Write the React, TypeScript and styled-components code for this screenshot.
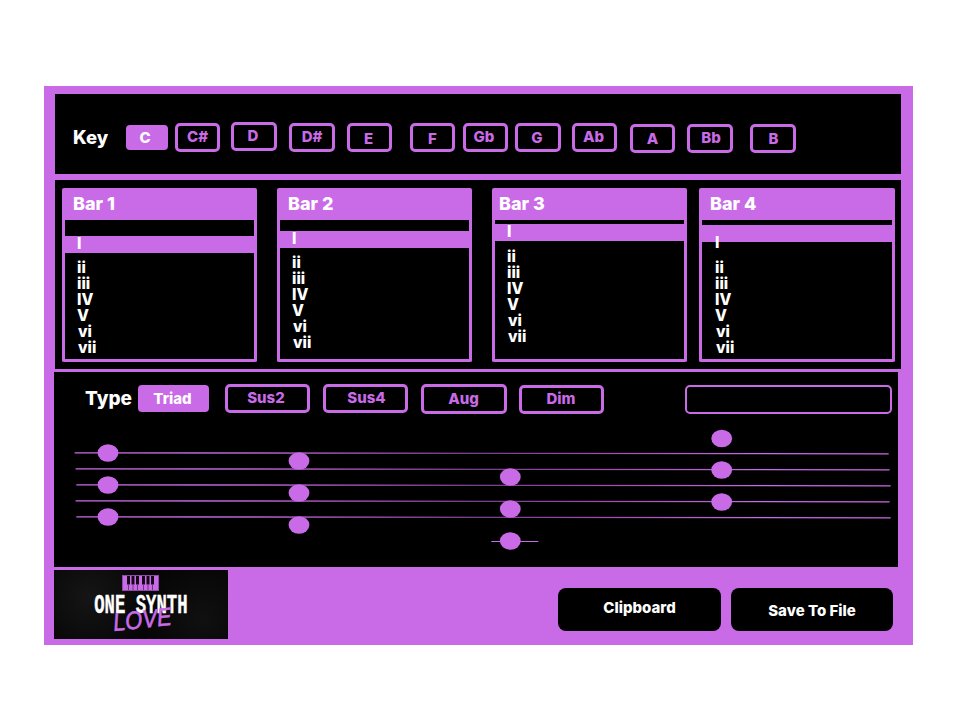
import React from "react";
import styled, { createGlobalStyle } from "styled-components";

const PURPLE = "#c96ae6";
const FONT = `Inter, "Liberation Sans", sans-serif`;

const GlobalStyle = createGlobalStyle`
  html, body { margin: 0; padding: 0; background: #fff; }
  body { font-family: ${FONT}; }
`;

// per button: [label, left margin, top offset inside the panel, width, height, text nudge x, text nudge y]
const KEYS: [string, number, number, number, number, number, number][] = [
  ["C#", 7, 29, 45, 29, 0, -3],
  ["D", 11, 28, 46, 29, -2, -3],
  ["D#", 12, 29, 46, 29, 0, -3],
  ["E", 12, 29, 45, 29, -2, 1],
  ["F", 18, 29, 45, 29, 0, 1],
  ["Gb", 8, 29, 45, 29, -3, -3],
  ["G", 7, 29, 46, 29, -2, -1],
  ["Ab", 11, 29, 45, 29, -2, -2],
  ["A", 13, 30, 45, 29, 0, 0],
  ["Bb", 12, 30, 46, 29, 2, -2],
  ["B", 17, 30, 46, 29, 1, -1],
];

const BARS = [
  { name: "Bar 1", ml: 7, w: 195, pad: 16, band: 16, gap: 7, x: 12, nameX: 8 },
  { name: "Bar 2", ml: 20, w: 195, pad: 11, band: 15, gap: 7, x: 12, nameX: 8 },
  { name: "Bar 3", ml: 20, w: 195, pad: 4, band: 16, gap: 8, x: 12, nameX: 4 },
  { name: "Bar 4", ml: 12, w: 196, pad: 5, band: 36, gap: 18, x: 13, nameX: 8 },
];

const DEGREES: [string, number][] = [
  ["ii", 0],
  ["iii", 0],
  ["IV", 0],
  ["V", 0],
  ["vi", 1],
  ["vii", 1],
];

const TYPES = [
  { label: "Sus2", ml: 16, mt: 12, w: 85, h: 29, dx: -3, dy: -2 },
  { label: "Sus4", ml: 13, mt: 12, w: 85, h: 29, dx: 2, dy: -2 },
  { label: "Aug", ml: 13, mt: 12, w: 86, h: 30, dx: -1, dy: -2 },
  { label: "Dim", ml: 12, mt: 13, w: 85, h: 29, dx: -1, dy: -2 },
];

const STAFF = [
  [74.6, 452.3, 888.7, 453.3],
  [75.6, 468.3, 889.6, 469.3],
  [76.3, 484.3, 890.7, 485.3],
  [75.6, 500.3, 889.6, 501.3],
  [76.3, 516.3, 890.7, 517.3],
];

const NOTES = [
  [108, 453], [108, 485], [108, 517],
  [299, 461], [299, 493], [299, 525],
  [510.3, 477], [510.3, 509], [510.3, 541],
  [721.7, 438.5], [721.7, 470], [721.7, 502],
];

const App = () => {
  return (
    <>
      <GlobalStyle />
      <Frame>
        <KeyPanel>
          <PanelLabel>Key</PanelLabel>
          <ActiveKey>C</ActiveKey>
          {KEYS.map(([label, ml, mt, w, h, dx, dy]) => (
            <OutlineButton key={label} $ml={ml} $mt={mt} $w={w} $h={h} $dx={dx} $dy={dy}>
              {label}
            </OutlineButton>
          ))}
        </KeyPanel>

        <BarsPanel>
          {BARS.map((bar) => (
            <BarCard key={bar.name} $ml={bar.ml} $w={bar.w}>
              <BarHeader $x={bar.nameX}>{bar.name}</BarHeader>
              <DegreeList $pad={bar.pad}>
                <SelectedDegree $lh={bar.band} $x={bar.x}>I</SelectedDegree>
                <DegreeRows $gap={bar.gap}>
                  {DEGREES.map(([d, shift]) => (
                    <Degree key={d} $x={bar.x + shift}>{d}</Degree>
                  ))}
                </DegreeRows>
              </DegreeList>
            </BarCard>
          ))}
        </BarsPanel>

        <TypePanel>
          <TypeRow>
            <TypeLabel>Type</TypeLabel>
            <ActiveType>Triad</ActiveType>
            {TYPES.map((t) => (
              <OutlineButton key={t.label} $ml={t.ml} $mt={t.mt} $w={t.w} $h={t.h} $dx={t.dx} $dy={t.dy}>
                {t.label}
              </OutlineButton>
            ))}
            <NameField />
          </TypeRow>
          <Staff viewBox="54 418 844 149">
            <defs>
              <linearGradient id="fade" x1="0" x2="1" y1="0" y2="0">
                <stop offset="0" stopColor={PURPLE} />
                <stop offset="0.15" stopColor={PURPLE} />
                <stop offset="0.5" stopColor={PURPLE} stopOpacity="0.6" />
                <stop offset="0.85" stopColor={PURPLE} />
                <stop offset="1" stopColor={PURPLE} />
              </linearGradient>
            </defs>
            {STAFF.map(([x1, y1, x2, y2]) => (
              <polygon
                key={y1}
                points={`${x1},${y1 - 0.15} ${x2},${y2 - 0.15} ${x2},${y2 + 1.15} ${x1},${y1 + 1.15}`}
                fill="url(#fade)"
              />
            ))}
            <rect x="491.3" y="541" width="47" height="1" fill={PURPLE} />
            {NOTES.map(([cx, cy]) => (
              <ellipse key={`${cx}-${cy}`} cx={cx} cy={cy} rx="10.4" ry="8.7" fill={PURPLE} />
            ))}
          </Staff>
        </TypePanel>

        <BottomRow>
          <Logo>
            <svg width="37" height="16" viewBox="0 0 37 16">
              <rect x="0.5" y="0.5" width="36" height="15" fill={PURPLE} stroke="#8f4aa6" />
              {[5, 9.5, 14, 20, 24.5, 29].map((x) => (
                <rect key={x} x={x} y="1" width="3" height="8.5" fill="#140818" />
              ))}
              {[6, 10.5, 15, 21, 25.5, 30].map((x) => (
                <rect key={x} x={x} y="9" width="1" height="6" fill="#6d3480" />
              ))}
            </svg>
            <LogoTitle>ONE SYNTH</LogoTitle>
            <LogoScript>LOVE</LogoScript>
          </Logo>
          <ActionButton $ml={330} $w={163} $dy={-2}>Clipboard</ActionButton>
          <ActionButton $ml={10} $w={162} $dy={1}>Save To File</ActionButton>
        </BottomRow>
      </Frame>
    </>
  );
};

const Frame = styled.div`
  box-sizing: border-box;
  width: 869px;
  height: 559px;
  margin: 86px 0 0 44px;
  background: ${PURPLE};
  display: flex;
  flex-direction: column;
  font-family: ${FONT};
`;

/* ================= KEY ROW ================= */
const KeyPanel = styled.div`
  box-sizing: border-box;
  width: 846px;
  height: 80px;
  margin: 8px 0 0 11px;
  padding-left: 18px;
  background: #000;
  display: flex;
  align-items: flex-start;
`;

const PanelLabel = styled.div`
  width: 53px;
  margin-top: 32px;
  color: #fff;
  font-size: 18.5px;
  line-height: 22px;
  font-weight: 800;
`;

const ActiveKey = styled.div`
  width: 42px;
  height: 25px;
  margin-top: 31px;
  padding-right: 4px;
  box-sizing: border-box;
  border-radius: 4px;
  background: ${PURPLE};
  color: #fff;
  font-size: 15px;
  font-weight: 800;
  display: flex;
  align-items: center;
  justify-content: center;
`;

const OutlineButton = styled.div<{ $ml: number; $mt: number; $w: number; $h: number; $dx: number; $dy: number }>`
  box-sizing: border-box;
  flex: none;
  width: ${(p) => p.$w}px;
  height: ${(p) => p.$h}px;
  margin-left: ${(p) => p.$ml}px;
  margin-top: ${(p) => p.$mt}px;
  padding-left: ${(p) => Math.max(p.$dx, 0)}px;
  padding-right: ${(p) => Math.max(-p.$dx, 0)}px;
  padding-top: ${(p) => Math.max(p.$dy, 0)}px;
  padding-bottom: ${(p) => Math.max(-p.$dy, 0)}px;
  border: 3px solid ${PURPLE};
  border-radius: 5px;
  color: ${PURPLE};
  font-size: 15px;
  font-weight: 800;
  display: flex;
  align-items: center;
  justify-content: center;
`;

/* ================= BARS ================= */
const BarsPanel = styled.div`
  box-sizing: border-box;
  width: 846px;
  height: 189px;
  margin: 6px 0 0 11px;
  padding: 8px 0 7px;
  background: #000;
  display: flex;
`;

const BarCard = styled.div<{ $ml: number; $w: number }>`
  box-sizing: border-box;
  width: ${(p) => p.$w}px;
  height: 174px;
  margin-left: ${(p) => p.$ml}px;
  border: 3px solid ${PURPLE};
  border-top: 0;
  border-radius: 2px;
  display: flex;
  flex-direction: column;
`;

const BarHeader = styled.div<{ $x: number }>`
  box-sizing: border-box;
  height: 32px;
  padding: 5px 0 0 ${(p) => p.$x}px;
  background: ${PURPLE};
  color: #fff;
  font-size: 18px;
  line-height: 22px;
  font-weight: 800;
`;

const DegreeList = styled.div<{ $pad: number }>`
  flex: 1;
  padding-top: ${(p) => p.$pad}px;
  color: #fff;
  font-size: 15.5px;
  font-weight: 800;
`;

const SelectedDegree = styled.div<{ $lh: number; $x: number }>`
  height: 17px;
  padding-left: ${(p) => p.$x}px;
  background: ${PURPLE};
  line-height: ${(p) => p.$lh}px;
`;

const DegreeRows = styled.div<{ $gap: number }>`
  margin-top: ${(p) => p.$gap}px;
`;

const Degree = styled.div<{ $x: number }>`
  height: 16.1px;
  line-height: 16px;
  padding-left: ${(p) => p.$x}px;
`;

/* ================= CHORD TYPE + STAFF ================= */
const TypePanel = styled.div`
  width: 844px;
  height: 195px;
  margin: 3px 0 0 10px;
  background: #000;
  display: flex;
  flex-direction: column;
`;

const TypeRow = styled.div`
  height: 46px;
  padding-left: 31px;
  display: flex;
  align-items: flex-start;
`;

const TypeLabel = styled.div`
  width: 53px;
  margin-top: 15px;
  color: #fff;
  font-size: 19px;
  line-height: 23px;
  font-weight: 800;
`;

const ActiveType = styled.div`
  box-sizing: border-box;
  width: 71px;
  height: 27px;
  margin-top: 13px;
  padding: 0 2px 1px 0;
  border-radius: 4px;
  background: ${PURPLE};
  color: #fff;
  font-size: 15px;
  font-weight: 800;
  display: flex;
  align-items: center;
  justify-content: center;
`;

const NameField = styled.div`
  box-sizing: border-box;
  width: 207px;
  height: 29px;
  margin: 13px 0 0 81px;
  border: 2px solid ${PURPLE};
  border-radius: 5px;
`;

const Staff = styled.svg`
  display: block;
  width: 844px;
  height: 149px;
`;

/* ================= BOTTOM ROW ================= */
const BottomRow = styled.div`
  margin: 3px 0 0 10px;
  display: flex;
  align-items: flex-start;
`;

const Logo = styled.div`
  position: relative;
  width: 174px;
  height: 69px;
  padding-top: 5px;
  box-sizing: border-box;
  background-color: #050505;
  background-image: radial-gradient(circle at 20% 40%, #151515 0, transparent 45%),
    radial-gradient(circle at 85% 70%, #101010 0, transparent 40%);
  display: flex;
  flex-direction: column;
  align-items: center;

  svg {
    display: block;
    margin-left: -1px;
  }
`;

const LogoTitle = styled.div`
  margin: 2px 0 0 -1px;
  color: #fff;
  font-family: "Liberation Mono", monospace;
  font-size: 27px;
  line-height: 26px;
  font-weight: 700;
  white-space: nowrap;
  transform: scaleX(0.64);
  -webkit-text-stroke: 0.4px #fff;
`;

const LogoScript = styled.div`
  position: absolute;
  left: 59px;
  top: 38px;
  color: ${PURPLE};
  font-family: "Liberation Sans", sans-serif;
  font-size: 25px;
  line-height: 28px;
  font-style: italic;
  transform-origin: left center;
  transform: rotate(-6deg) scaleX(0.88);
  -webkit-text-stroke: 0.6px ${PURPLE};
`;

const ActionButton = styled.div<{ $ml: number; $w: number; $dy: number }>`
  box-sizing: border-box;
  width: ${(p) => p.$w}px;
  height: 43px;
  margin: 18px 0 0 ${(p) => p.$ml}px;
  padding-top: ${(p) => Math.max(p.$dy, 0) * 2}px;
  padding-bottom: ${(p) => Math.max(-p.$dy, 0) * 2}px;
  border-radius: 8px;
  background: #000;
  color: #fff;
  font-size: 15px;
  font-weight: 800;
  display: flex;
  align-items: center;
  justify-content: center;
`;

export default App;
